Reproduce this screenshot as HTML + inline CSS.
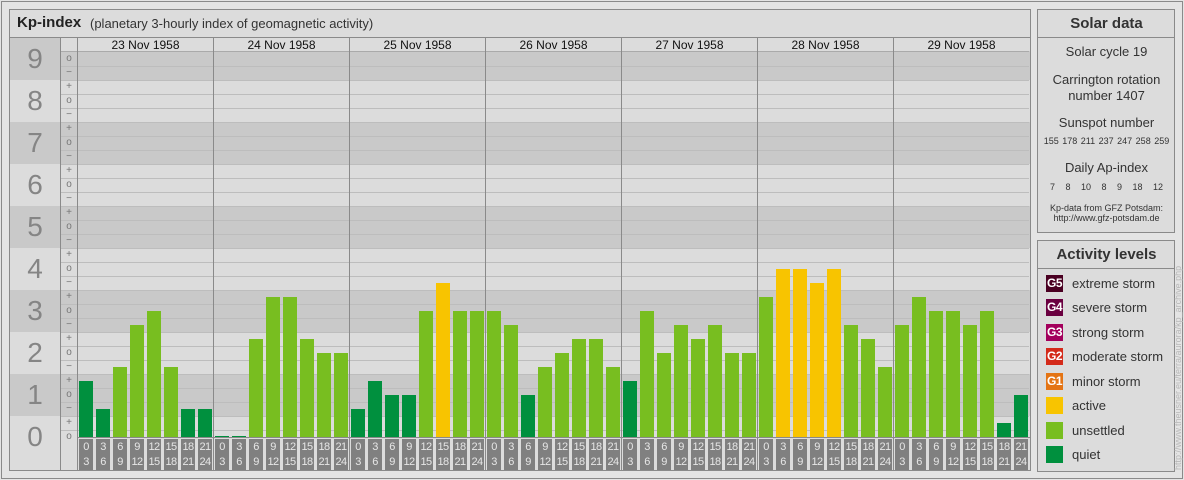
<!DOCTYPE html>
<html><head><meta charset="utf-8"><style>
*{margin:0;padding:0;box-sizing:border-box}
body{width:1184px;height:480px;background:#e4e4e4;font-family:"Liberation Sans",Arial,sans-serif;position:relative;overflow:hidden;color:#222}
.abs{position:absolute}
.fr{position:absolute;border:1px solid #8a8a8a}
.dk{position:absolute;background:#c9c9c9}
.hl{position:absolute;height:1px;background:#bdbdbd;left:60px;width:969px}
.vl{position:absolute;width:1px;background:#8a8a8a;top:38px;height:432px}
.n{position:absolute;left:10px;width:50px;text-align:center;font-size:28px;color:#858585;line-height:30px}
.s{position:absolute;left:61px;width:16px;text-align:center;font-size:10px;color:#777;line-height:10px}
.d{position:absolute;top:38px;width:135px;text-align:center;font-size:12px;line-height:14px;color:#111}
.b{position:absolute;width:14px}
.q{background:#00903e}.u{background:#78be20}.a{background:#f8c400}
.t{position:absolute;top:439px;width:14px;height:31px;background:#808080;color:#e6e6e6;font-size:11px;line-height:15px;text-align:center;letter-spacing:-0.6px;padding-top:1px}
.c{position:absolute;left:1038px;width:137px;text-align:center;color:#333}
.lg{position:absolute;left:1046px;width:17px;height:17px;color:#fff;font-size:12px;font-weight:bold;line-height:17px;text-align:center;letter-spacing:-0.5px}
.lt{position:absolute;left:1072px;font-size:13px;color:#333;line-height:17px}
</style></head><body>
<div class="fr" style="left:1px;top:1px;width:1182px;height:478px"></div>
<!-- main panel -->
<div class="abs" style="left:9px;top:9px;width:1022px;height:462px;background:#dcdcdc"></div>
<div class="abs" style="left:17px;top:14px;font-size:15px;font-weight:bold;color:#222">Kp-index</div>
<div class="abs" style="left:90px;top:16px;font-size:13px;color:#333">(planetary 3-hourly index of geomagnetic activity)</div>
<div class="abs" style="left:9px;top:37px;width:1022px;height:1px;background:#8a8a8a"></div>
<!-- bands -->
<div class="dk" style="left:10px;top:38px;width:50px;height:42px"></div>
<div class="dk" style="left:60px;top:51px;width:970px;height:29px"></div>
<div class="dk" style="left:10px;top:122px;width:1020px;height:42px"></div>
<div class="dk" style="left:10px;top:206px;width:1020px;height:42px"></div>
<div class="dk" style="left:10px;top:290px;width:1020px;height:42px"></div>
<div class="dk" style="left:10px;top:374px;width:1020px;height:42px"></div>
<!-- lines -->
<div class="hl" style="top:51px;background:#aaa"></div>
<div class="hl" style="top:66px"></div><div class="hl" style="top:80px"></div><div class="hl" style="top:94px"></div><div class="hl" style="top:108px"></div><div class="hl" style="top:122px"></div><div class="hl" style="top:136px"></div><div class="hl" style="top:150px"></div><div class="hl" style="top:164px"></div><div class="hl" style="top:178px"></div><div class="hl" style="top:192px"></div><div class="hl" style="top:206px"></div><div class="hl" style="top:220px"></div><div class="hl" style="top:234px"></div><div class="hl" style="top:248px"></div><div class="hl" style="top:262px"></div><div class="hl" style="top:276px"></div><div class="hl" style="top:290px"></div><div class="hl" style="top:304px"></div><div class="hl" style="top:318px"></div><div class="hl" style="top:332px"></div><div class="hl" style="top:346px"></div><div class="hl" style="top:360px"></div><div class="hl" style="top:374px"></div><div class="hl" style="top:388px"></div><div class="hl" style="top:402px"></div><div class="hl" style="top:416px"></div><div class="hl" style="top:430px"></div>
<div class="abs" style="left:77px;top:437px;width:953px;height:1px;background:#8a8a8a"></div>
<div class="vl" style="left:60px"></div><div class="vl" style="left:77px"></div>
<div class="vl" style="left:213px"></div><div class="vl" style="left:349px"></div><div class="vl" style="left:485px"></div><div class="vl" style="left:621px"></div><div class="vl" style="left:757px"></div><div class="vl" style="left:893px"></div>
<!-- big numbers -->
<div class="n" style="top:44px">9</div><div class="n" style="top:86px">8</div><div class="n" style="top:128px">7</div><div class="n" style="top:170px">6</div><div class="n" style="top:212px">5</div><div class="n" style="top:254px">4</div><div class="n" style="top:296px">3</div><div class="n" style="top:338px">2</div><div class="n" style="top:380px">1</div><div class="n" style="top:422px">0</div>
<!-- small labels -->
<div class="s" style="top:54px">o</div><div class="s" style="top:68px">−</div>
<div class="s" style="top:82px">+</div><div class="s" style="top:96px">o</div><div class="s" style="top:110px">−</div>
<div class="s" style="top:124px">+</div><div class="s" style="top:138px">o</div><div class="s" style="top:152px">−</div>
<div class="s" style="top:166px">+</div><div class="s" style="top:180px">o</div><div class="s" style="top:194px">−</div>
<div class="s" style="top:208px">+</div><div class="s" style="top:222px">o</div><div class="s" style="top:236px">−</div>
<div class="s" style="top:250px">+</div><div class="s" style="top:264px">o</div><div class="s" style="top:278px">−</div>
<div class="s" style="top:292px">+</div><div class="s" style="top:306px">o</div><div class="s" style="top:320px">−</div>
<div class="s" style="top:334px">+</div><div class="s" style="top:348px">o</div><div class="s" style="top:362px">−</div>
<div class="s" style="top:376px">+</div><div class="s" style="top:390px">o</div><div class="s" style="top:404px">−</div>
<div class="s" style="top:418px">+</div><div class="s" style="top:432px">o</div>
<!-- dates -->
<div class="d" style="left:78px">23 Nov 1958</div><div class="d" style="left:214px">24 Nov 1958</div><div class="d" style="left:350px">25 Nov 1958</div><div class="d" style="left:486px">26 Nov 1958</div><div class="d" style="left:622px">27 Nov 1958</div><div class="d" style="left:758px">28 Nov 1958</div><div class="d" style="left:894px">29 Nov 1958</div>
<!-- bars day1: 4,2,5,8,9,5,2,2 -->
<div class="b q" style="left:79px;top:381px;height:56px"></div><div class="b q" style="left:96px;top:409px;height:28px"></div><div class="b u" style="left:113px;top:367px;height:70px"></div><div class="b u" style="left:130px;top:325px;height:112px"></div><div class="b u" style="left:147px;top:311px;height:126px"></div><div class="b u" style="left:164px;top:367px;height:70px"></div><div class="b q" style="left:181px;top:409px;height:28px"></div><div class="b q" style="left:198px;top:409px;height:28px"></div>
<!-- day2: 0,0,7,10,10,7,6,6 -->
<div class="b q" style="left:215px;top:436px;height:1px"></div><div class="b q" style="left:232px;top:436px;height:1px"></div><div class="b u" style="left:249px;top:339px;height:98px"></div><div class="b u" style="left:266px;top:297px;height:140px"></div><div class="b u" style="left:283px;top:297px;height:140px"></div><div class="b u" style="left:300px;top:339px;height:98px"></div><div class="b u" style="left:317px;top:353px;height:84px"></div><div class="b u" style="left:334px;top:353px;height:84px"></div>
<!-- day3: 2,4,3,3,9,11,9,9 -->
<div class="b q" style="left:351px;top:409px;height:28px"></div><div class="b q" style="left:368px;top:381px;height:56px"></div><div class="b q" style="left:385px;top:395px;height:42px"></div><div class="b q" style="left:402px;top:395px;height:42px"></div><div class="b u" style="left:419px;top:311px;height:126px"></div><div class="b a" style="left:436px;top:283px;height:154px"></div><div class="b u" style="left:453px;top:311px;height:126px"></div><div class="b u" style="left:470px;top:311px;height:126px"></div>
<!-- day4: 9,8,3,5,6,7,7,5 -->
<div class="b u" style="left:487px;top:311px;height:126px"></div><div class="b u" style="left:504px;top:325px;height:112px"></div><div class="b q" style="left:521px;top:395px;height:42px"></div><div class="b u" style="left:538px;top:367px;height:70px"></div><div class="b u" style="left:555px;top:353px;height:84px"></div><div class="b u" style="left:572px;top:339px;height:98px"></div><div class="b u" style="left:589px;top:339px;height:98px"></div><div class="b u" style="left:606px;top:367px;height:70px"></div>
<!-- day5: 4,9,6,8,7,8,6,6 -->
<div class="b q" style="left:623px;top:381px;height:56px"></div><div class="b u" style="left:640px;top:311px;height:126px"></div><div class="b u" style="left:657px;top:353px;height:84px"></div><div class="b u" style="left:674px;top:325px;height:112px"></div><div class="b u" style="left:691px;top:339px;height:98px"></div><div class="b u" style="left:708px;top:325px;height:112px"></div><div class="b u" style="left:725px;top:353px;height:84px"></div><div class="b u" style="left:742px;top:353px;height:84px"></div>
<!-- day6: 10,12,12,11,12,8,7,5 -->
<div class="b u" style="left:759px;top:297px;height:140px"></div><div class="b a" style="left:776px;top:269px;height:168px"></div><div class="b a" style="left:793px;top:269px;height:168px"></div><div class="b a" style="left:810px;top:283px;height:154px"></div><div class="b a" style="left:827px;top:269px;height:168px"></div><div class="b u" style="left:844px;top:325px;height:112px"></div><div class="b u" style="left:861px;top:339px;height:98px"></div><div class="b u" style="left:878px;top:367px;height:70px"></div>
<!-- day7: 8,10,9,9,8,9,1,3 -->
<div class="b u" style="left:895px;top:325px;height:112px"></div><div class="b u" style="left:912px;top:297px;height:140px"></div><div class="b u" style="left:929px;top:311px;height:126px"></div><div class="b u" style="left:946px;top:311px;height:126px"></div><div class="b u" style="left:963px;top:325px;height:112px"></div><div class="b u" style="left:980px;top:311px;height:126px"></div><div class="b q" style="left:997px;top:423px;height:14px"></div><div class="b q" style="left:1014px;top:395px;height:42px"></div>
<!-- time labels -->
<div class="t" style="left:79px">0<br>3</div><div class="t" style="left:96px">3<br>6</div><div class="t" style="left:113px">6<br>9</div><div class="t" style="left:130px">9<br>12</div><div class="t" style="left:147px">12<br>15</div><div class="t" style="left:164px">15<br>18</div><div class="t" style="left:181px">18<br>21</div><div class="t" style="left:198px">21<br>24</div>
<div class="t" style="left:215px">0<br>3</div><div class="t" style="left:232px">3<br>6</div><div class="t" style="left:249px">6<br>9</div><div class="t" style="left:266px">9<br>12</div><div class="t" style="left:283px">12<br>15</div><div class="t" style="left:300px">15<br>18</div><div class="t" style="left:317px">18<br>21</div><div class="t" style="left:334px">21<br>24</div>
<div class="t" style="left:351px">0<br>3</div><div class="t" style="left:368px">3<br>6</div><div class="t" style="left:385px">6<br>9</div><div class="t" style="left:402px">9<br>12</div><div class="t" style="left:419px">12<br>15</div><div class="t" style="left:436px">15<br>18</div><div class="t" style="left:453px">18<br>21</div><div class="t" style="left:470px">21<br>24</div>
<div class="t" style="left:487px">0<br>3</div><div class="t" style="left:504px">3<br>6</div><div class="t" style="left:521px">6<br>9</div><div class="t" style="left:538px">9<br>12</div><div class="t" style="left:555px">12<br>15</div><div class="t" style="left:572px">15<br>18</div><div class="t" style="left:589px">18<br>21</div><div class="t" style="left:606px">21<br>24</div>
<div class="t" style="left:623px">0<br>3</div><div class="t" style="left:640px">3<br>6</div><div class="t" style="left:657px">6<br>9</div><div class="t" style="left:674px">9<br>12</div><div class="t" style="left:691px">12<br>15</div><div class="t" style="left:708px">15<br>18</div><div class="t" style="left:725px">18<br>21</div><div class="t" style="left:742px">21<br>24</div>
<div class="t" style="left:759px">0<br>3</div><div class="t" style="left:776px">3<br>6</div><div class="t" style="left:793px">6<br>9</div><div class="t" style="left:810px">9<br>12</div><div class="t" style="left:827px">12<br>15</div><div class="t" style="left:844px">15<br>18</div><div class="t" style="left:861px">18<br>21</div><div class="t" style="left:878px">21<br>24</div>
<div class="t" style="left:895px">0<br>3</div><div class="t" style="left:912px">3<br>6</div><div class="t" style="left:929px">6<br>9</div><div class="t" style="left:946px">9<br>12</div><div class="t" style="left:963px">12<br>15</div><div class="t" style="left:980px">15<br>18</div><div class="t" style="left:997px">18<br>21</div><div class="t" style="left:1014px">21<br>24</div>
<div class="fr" style="left:9px;top:9px;width:1022px;height:462px"></div>
<!-- solar panel -->
<div class="abs" style="left:1037px;top:9px;width:138px;height:224px;background:#dcdcdc;border:1px solid #8a8a8a"></div>
<div class="abs" style="left:1037px;top:37px;width:138px;height:1px;background:#8a8a8a"></div>
<div class="c" style="top:15px;font-size:15px;font-weight:bold">Solar data</div>
<div class="c" style="top:44px;font-size:13px">Solar cycle 19</div>
<div class="c" style="top:72px;font-size:13px;line-height:16px">Carrington rotation<br>number 1407</div>
<div class="c" style="top:115px;font-size:13px">Sunspot number</div>
<div class="c" style="top:136px;font-size:9px;word-spacing:1px">155 178 211 237 247 258 259</div>
<div class="c" style="top:160px;font-size:13px">Daily Ap-index</div>
<div class="c" style="top:182px;font-size:9px;word-spacing:8px">7 8 10 8 9 18 12</div>
<div class="c" style="top:203px;font-size:9px;line-height:10px">Kp-data from GFZ Potsdam:<br>http://www.gfz-potsdam.de</div>
<!-- activity panel -->
<div class="abs" style="left:1037px;top:240px;width:138px;height:232px;background:#dcdcdc;border:1px solid #8a8a8a"></div>
<div class="abs" style="left:1037px;top:268px;width:138px;height:1px;background:#8a8a8a"></div>
<div class="c" style="top:246px;font-size:15px;font-weight:bold">Activity levels</div>
<div class="lg" style="top:275px;background:#4a0022">G5</div><div class="lt" style="top:275px">extreme storm</div>
<div class="lg" style="top:299px;background:#6a0040">G4</div><div class="lt" style="top:299px">severe storm</div>
<div class="lg" style="top:324px;background:#a3005c">G3</div><div class="lt" style="top:324px">strong storm</div>
<div class="lg" style="top:348px;background:#d42a1a">G2</div><div class="lt" style="top:348px">moderate storm</div>
<div class="lg" style="top:373px;background:#e47414">G1</div><div class="lt" style="top:373px">minor storm</div>
<div class="lg" style="top:397px;background:#f8c400"></div><div class="lt" style="top:397px">active</div>
<div class="lg" style="top:422px;background:#78be20"></div><div class="lt" style="top:422px">unsettled</div>
<div class="lg" style="top:446px;background:#00903e"></div><div class="lt" style="top:446px">quiet</div>
<div class="abs" style="left:1179px;top:470px;transform-origin:0 0;transform:rotate(-90deg);font-size:9px;color:#b8b8b8;white-space:nowrap;line-height:9px;margin-left:-5px">http://www.theusner.eu/terra/aurora/kp_archive.php</div>
</body></html>
